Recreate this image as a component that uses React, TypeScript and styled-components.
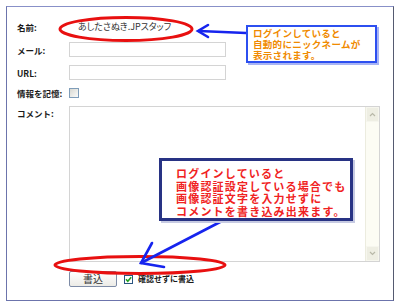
import React from "react";
import styled, { createGlobalStyle } from "styled-components";

const GlobalStyle = createGlobalStyle`
  html, body {
    margin: 0;
    padding: 0;
    background: #ffffff;
  }
  body {
    font-family: "Noto Sans CJK JP", "DejaVu Sans", sans-serif;
    color: #222;
  }
`;

const Page = styled.div`
  position: relative;
  width: 400px;
  height: 308px;
  overflow: hidden;
`;

const Frame = styled.div`
  position: absolute;
  left: 6px;
  top: 6px;
  width: 386px;
  height: 293px;
  border: 1px solid #6c74ac;
  border-top-color: #8890c8;
  border-right-color: #555a70;
  background: #fff;
  box-sizing: content-box;
`;

const Form = styled.div`
  display: grid;
  grid-template-columns: 52px 1fr;
  grid-template-rows: 15px 15px 15px 10px 156px 16px;
  row-gap: 8px;
  padding: 12px 12px 0 10px;
`;

const Label = styled.div<{ $top?: boolean }>`
  font-size: 8.5px;
  font-weight: 700;
  color: #1a1a1a;
  line-height: 10px;
  white-space: nowrap;
  align-self: ${(p) => (p.$top ? "start" : "center")};
  padding-top: ${(p) => (p.$top ? "2px" : "0")};
`;

const NameValue = styled.div`
  align-self: center;
  padding-left: 9px;
  font-size: 9px;
  line-height: 12px;
  color: #333;
  font-feature-settings: "palt";
  white-space: nowrap;
`;

const TextInput = styled.div`
  width: 157px;
  height: 15px;
  box-sizing: border-box;
  border: 1px solid #d4d4d4;
  background: #fff;
`;

const Check = styled.div<{ $checked?: boolean }>`
  width: ${(p) => (p.$checked ? "9px" : "10px")};
  height: ${(p) => (p.$checked ? "9px" : "10px")};
  box-sizing: border-box;
  border: 1px solid ${(p) => (p.$checked ? "#2b5580" : "#7f9db9")};
  background: ${(p) =>
    p.$checked
      ? "#fff"
      : "linear-gradient(135deg, #d8d8d2 0%, #eeeeea 60%, #fafafa 100%)"};
  position: relative;
  align-self: center;
  flex: none;
`;

const TextAreaBox = styled.div`
  display: flex;
  width: 311px;
  height: 156px;
  box-sizing: border-box;
  border: 1px solid #d4d4d4;
  background: #fff;
`;

const TextAreaField = styled.div`
  flex: 1;
`;

const ScrollTrack = styled.div`
  width: 13px;
  display: flex;
  flex-direction: column;
  justify-content: space-between;
  background: #fcfcf4;
  border-left: 1px solid #ececdf;
`;

const ScrollButton = styled.div`
  height: 13px;
  display: flex;
  align-items: center;
  justify-content: center;
  background: #eeeee3;
  border: 1px solid #f6f6ee;
`;

const ButtonRow = styled.div`
  display: flex;
  align-items: center;
  gap: 7px;
  margin-top: 2px;
`;

const SubmitButton = styled.button`
  width: 48px;
  height: 16px;
  padding: 0;
  border: 1px solid #7d8ba6;
  border-radius: 2px;
  background: linear-gradient(#ffffff, #ecebe6);
  font-family: "Noto Sans CJK JP", sans-serif;
  font-size: 10px;
  line-height: 12px;
  color: #333;
`;

const SmallLabel = styled.span`
  font-size: 8px;
  font-weight: 700;
  color: #1a1a1a;
  line-height: 10px;
  white-space: nowrap;
  margin-left: -2px;
`;

const Callout = styled.div<{ $variant: "info" | "warn" }>`
  position: absolute;
  box-sizing: border-box;
  background: #fff;
  font-family: "Liberation Sans", "Noto Sans CJK JP", sans-serif;
  font-weight: 700;
  white-space: nowrap;
  ${(p) =>
    p.$variant === "info"
      ? `
    left: 246px;
    top: 25px;
    width: 131px;
    height: 38px;
    border: 2px solid #2c4ff0;
    box-shadow: 2px 2px 0 #a8b4f4;
    color: #f08a00;
    font-size: 9.5px;
    letter-spacing: 0.3px;
    line-height: 11px;
    padding: 1px 0 0 5px;
  `
      : `
    left: 159px;
    top: 158px;
    width: 194px;
    height: 63px;
    border: 3px solid #283384;
    box-shadow: 2px 2px 0 #c6cae2;
    color: #f02222;
    font-size: 11px;
    letter-spacing: 1.2px;
    line-height: 12.7px;
    padding: 7px 0 0 14px;
  `}
`;

const Overlay = styled.svg`
  position: absolute;
  left: 0;
  top: 0;
  pointer-events: none;
`;

const ArrowUp = () => (
  <svg width="7" height="5" viewBox="0 0 7 5">
    <path d="M1 4 L3.5 1.5 L6 4" fill="none" stroke="#b8b8a8" strokeWidth="1.2" />
  </svg>
);

const ArrowDown = () => (
  <svg width="7" height="5" viewBox="0 0 7 5">
    <path d="M1 1 L3.5 3.5 L6 1" fill="none" stroke="#b8b8a8" strokeWidth="1.2" />
  </svg>
);

const CheckMark = () => (
  <svg width="9" height="9" viewBox="0 0 9 9" style={{ position: "absolute", left: -1, top: -1 }}>
    <path d="M2 4.3 L3.8 6.3 L7.2 2.2" fill="none" stroke="#21a121" strokeWidth="1.6" />
  </svg>
);

export default function App() {
  return (
    <>
      <GlobalStyle />
      <Page>
        <Frame>
          <Form>
            <Label>名前:</Label>
            <NameValue>あしたさぬき.JPスタッフ</NameValue>

            <Label>メール:</Label>
            <TextInput />

            <Label>URL:</Label>
            <TextInput />

            <Label>情報を記憶:</Label>
            <Check />

            <Label $top>コメント:</Label>
            <TextAreaBox>
              <TextAreaField />
              <ScrollTrack>
                <ScrollButton>
                  <ArrowUp />
                </ScrollButton>
                <ScrollButton>
                  <ArrowDown />
                </ScrollButton>
              </ScrollTrack>
            </TextAreaBox>

            <div />
            <ButtonRow>
              <SubmitButton>書込</SubmitButton>
              <Check $checked>
                <CheckMark />
              </Check>
              <SmallLabel>確認せずに書込</SmallLabel>
            </ButtonRow>
          </Form>
        </Frame>

        <Overlay width="400" height="308" viewBox="0 0 400 308">
          <ellipse cx="126" cy="29" rx="66" ry="11.5" fill="none" stroke="#e81010" strokeWidth="3" />
          <ellipse cx="140" cy="265" rx="85" ry="8.5" fill="none" stroke="#e81010" strokeWidth="3" />
          <g stroke="#1624ee" strokeWidth="2.6" fill="none" strokeLinecap="round">
            <path d="M246 33 L199 31" />
            <path d="M208 25 L198 31 L208 37" />
            <path d="M222 221 L141 263" />
            <path d="M152 243 L141 263 L164 267" />
          </g>
        </Overlay>

        <Callout $variant="info">
          ログインしていると
          <br />
          自動的にニックネームが
          <br />
          表示されます。
        </Callout>

        <Callout $variant="warn">
          ログインしていると
          <br />
          画像認証設定している場合でも
          <br />
          画像認証文字を入力せずに
          <br />
          コメントを書き込み出来ます。
        </Callout>
      </Page>
    </>
  );
}
